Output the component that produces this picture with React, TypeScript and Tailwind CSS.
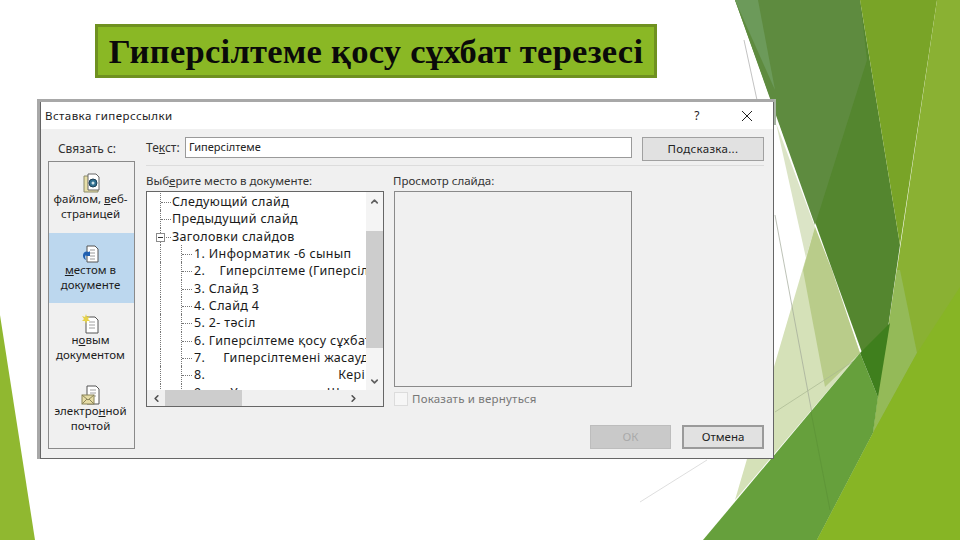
import { ChevronDown, ChevronLeft, ChevronRight, ChevronUp } from 'lucide-react'

const ui = "font-['Noto_Sans','Open_Sans',sans-serif]"

function Backdrop() {
  return (
    <svg className="absolute inset-0" width="960" height="540" viewBox="0 0 960 540">
      <polygon points="0,315 35,540 0,540" fill="#90b830" />
      {/* pale shards behind the dialog */}
      <polygon points="776,123 815,227 806,258" fill="#dbe4c6" />
      <polygon points="815,227 860,353 735,500" fill="#d5e1b8" />
      <polygon points="815,227 832,270 860,353 825,387 803,270" fill="#b9cc8a" />
      <line x1="744" y1="40" x2="757" y2="100" stroke="#a8a8a8" strokeWidth="0.7" />
      <line x1="775" y1="215" x2="830" y2="510" stroke="#a0a898" strokeWidth="0.7" />
      <line x1="640" y1="502" x2="707" y2="460" stroke="#d0d0d0" strokeWidth="0.7" />
      <line x1="775" y1="412" x2="860" y2="357" stroke="#a9b890" strokeWidth="0.7" />
      {/* top right */}
      <polygon points="735,0 860,0 900,245 878,397" fill="#54862f" />
      <polygon points="735,0 860,0 867,60 815,225" fill="#5e8b3f" />
      <polygon points="735,0 758,0 775,90" fill="#6c9a5a" />
      <polygon points="860,0 937,0 900,245" fill="#79a427" />
      <polygon points="937,0 960,0 960,540 817,540 873,433 878,397" fill="#8ab133" />
      <polygon points="900,270 917,353 873,433 878,397 897,270" fill="#94ba58" />
      {/* bottom right */}
      <polygon points="860,353 878,397 873,433 817,540 703,540" fill="#66a03c" />
      <polygon points="860,353 890,323 878,397" fill="#3f7f1d" />
      <polygon points="960,287 960,540 817,540 873,433 917,353" fill="#87b525" />
      <line x1="811" y1="412" x2="830" y2="510" stroke="#5b9236" strokeWidth="0.7" />
      <rect x="774" y="99" width="2" height="26" fill="#a9b5a5" />
    </svg>
  )
}

function FileIcon() {
  return (
    <svg width="20" height="20" viewBox="0 0 20 20">
      <path d="M3 3h9l5 0v16H3z" fill="#e8dfa8" stroke="#8a8a6a" />
      <path d="M7 1h8l3 3v13H7z" fill="#fff" stroke="#666" />
      <circle cx="12" cy="10" r="4" fill="#2f6f8f" stroke="#1d3f55" />
      <circle cx="12" cy="10" r="1.5" fill="#cfe3ea" />
    </svg>
  )
}

function PlaceIcon() {
  return (
    <svg width="20" height="20" viewBox="0 0 20 20">
      <path d="M6 2h8l3 3v13H6z" fill="#fff" stroke="#555" />
      <path d="M9 6h5M9 9h5M9 12h5M9 15h5" stroke="#9a9a9a" />
      <path d="M2 11a4 4 0 0 1 6-3l1-1v5H5l1-1a2 2 0 0 0-2 2l1 3a5 5 0 0 1-3-5z" fill="#1f5fb0" />
    </svg>
  )
}

function NewDocIcon() {
  return (
    <svg width="20" height="20" viewBox="0 0 20 20">
      <path d="M5 3h9l3 3v13H5z" fill="#fff" stroke="#555" />
      <path d="M8 8h6M8 11h6M8 14h6" stroke="#a0a0a0" />
      <path d="M5 0l1 3 3-1-2 3 2 2-3 0-1 3-1-3-3 0 2-2-2-3 3 1z" fill="#e6d24a" />
    </svg>
  )
}

function MailIcon() {
  return (
    <svg width="22" height="22" viewBox="0 0 22 22">
      <path d="M7 2h9l3 3v15H7z" fill="#fff" stroke="#555" />
      <path d="M10 6h6M10 9h6M10 12h6" stroke="#a0a0a0" />
      <rect x="2" y="11" width="12" height="9" fill="#e5dca6" stroke="#8a8458" />
      <path d="M2 11l6 5 6-5M2 20l5-5M14 20l-5-5" fill="none" stroke="#8a8458" />
    </svg>
  )
}

function LinkItem({ icon, selected, h, children }: { icon: React.ReactNode; selected?: boolean; h: string; children: React.ReactNode }) {
  return (
    <div className={`flex flex-col items-center pt-[11px] pr-[2px] text-center text-[11.5px] leading-[14.5px] text-[#1c1c1c] ${h} ${selected ? 'bg-[#bcd7ee]' : ''}`}>
      <div className="flex h-[19px] items-center justify-center">{icon}</div>
      {children}
    </div>
  )
}

const topRows = ['Следующий слайд', 'Предыдущий слайд', 'Заголовки слайдов']
const slideRows = [
  { text: '1. Информатик -6 сынып' },
  { text: '2.    Гиперсілтеме (Гиперсілтеме' },
  { text: '3. Слайд 3' },
  { text: '4. Слайд 4' },
  { text: '5. 2- тәсіл' },
  { text: '6. Гиперсілтеме қосу сұхбат терезесі' },
  { text: '7.     Гиперсілтемені жасауды' },
  { text: '8.', end: 'Кері' },
  { text: '9.       Ұсыныстар', end: 'Ш' },
]

function Tree() {
  return (
    <div className="h-[198px] flex-1 overflow-hidden pt-[1px] text-[12.5px] leading-[17.35px] tracking-[0.35px] text-[#1a1a1a]">
      {topRows.map((r, i) => (
        <div key={r} className="relative flex h-[17.35px] items-stretch whitespace-pre">
          <div className="w-[14px] shrink-0 border-r border-dotted border-[#777]" />
          <div className="mt-[9px] mr-[1px] h-0 w-[10px] shrink-0 border-t border-dotted border-[#777]" />
          <span>{r}</span>
          {i === 2 && (
            <div className="absolute top-[5px] left-[9px] flex h-[9px] w-[9px] items-center justify-center border border-[#8c8c8c] bg-white">
              <div className="h-px w-[5px] bg-[#333]" />
            </div>
          )}
        </div>
      ))}
      {slideRows.map((r) => (
        <div key={r.text} className="flex h-[17.35px] items-stretch whitespace-pre">
          <div className="w-[14px] shrink-0 border-r border-dotted border-[#777]" />
          <div className="w-[21px] shrink-0 border-r border-dotted border-[#777]" />
          <div className="mt-[9px] mr-[2px] h-0 w-[10px] shrink-0 border-t border-dotted border-[#777]" />
          <span>{r.text}</span>
          {r.end && <span className={`ml-auto ${r.end === 'Ш' ? 'pr-[26px]' : 'pr-[1px]'}`}>{r.end}</span>}
        </div>
      ))}
    </div>
  )
}

export default function App() {
  return (
    <div className="relative h-[540px] w-[960px] overflow-hidden bg-white">
      <Backdrop />
      <div className="relative flex flex-col pt-[24px]">
        <div className="ml-[95px] flex h-[54px] w-[562px] items-center justify-center border-[3px] border-[#6f9120] bg-[#8ab825] pt-[1px] font-['Liberation_Serif',serif] text-[34.5px] font-bold tracking-[0.27px] text-[#0a0a0a]">
          Гиперсілтеме қосу сұхбат терезесі
        </div>

        <div className={`mt-[21px] ml-[37px] h-[360px] w-[737px] border-t-[3px] border-l-[3px] border-[#a8a8a8] ${ui}`}>
          <div className="flex h-full flex-col border-r border-b border-l border-[#666] bg-[#f0f0f0]">
            <div className="flex h-[27px] shrink-0 items-center justify-between bg-white pr-[20px] pl-[4px] text-[11.5px] tracking-[0.45px] text-[#222]">
              <span>Вставка гиперссылки</span>
              <div className="flex items-center gap-[41px]">
                <span className="text-[12px]">?</span>
                <svg width="12" height="12" viewBox="0 0 12 12">
                  <path d="M1 1l10 10M11 1L1 11" stroke="#222" strokeWidth="1" />
                </svg>
              </div>
            </div>

            <div className="flex flex-1">
              <div className="ml-[7px] w-[87px] shrink-0">
                <div className="flex h-[32px] items-center justify-center pt-[7px] pr-[9px] text-[12px] text-[#333]">Связать с:</div>
                <div className="h-[288px] border border-[#8a8a8a]">
                  <LinkItem icon={<FileIcon />} h="h-[71px]">
                    <span>файлом, <u>в</u>еб-</span>
                    <span>страницей</span>
                  </LinkItem>
                  <LinkItem icon={<PlaceIcon />} selected h="h-[70px]">
                    <span><u>м</u>естом в</span>
                    <span>документе</span>
                  </LinkItem>
                  <LinkItem icon={<NewDocIcon />} h="h-[71px]">
                    <span>н<u>о</u>вым</span>
                    <span>документом</span>
                  </LinkItem>
                  <LinkItem icon={<MailIcon />} h="h-[70px]">
                    <span>электро<u>н</u>ной</span>
                    <span>почтой</span>
                  </LinkItem>
                </div>
              </div>

              <div className="ml-[11px] flex w-[618px] flex-col pt-[8px] text-[11.5px] text-[#333]">
                <div className="flex h-[24px] items-start">
                  <span className="w-[39px] shrink-0 pt-[2px] text-[12px]">Те<u>к</u>ст:</span>
                  <div className="flex h-[21px] w-[447px] items-center border border-[#9a9a9a] bg-white pl-[3px] text-[11px] text-[#222]">
                    Гиперсілтеме
                  </div>
                  <div className="ml-[10px] flex h-[24px] w-[122px] items-center justify-center border border-[#a0a0a0] bg-[#e1e1e1] tracking-[0.3px] text-[#222]">
                    Подсказка...
                  </div>
                </div>
                <div className="mt-[4px] h-px bg-[#dcdcdc]" />

                <div className="mt-[9px] flex">
                  <div className="w-[238px]">
                    <div className="h-[16px] leading-[11px]">Выб<u>е</u>рите место в документе:</div>
                    <div className="flex h-[216px] flex-col border border-[#666] bg-white">
                      <div className="flex h-[198px]">
                        <Tree />
                        <div className="flex w-[17px] shrink-0 flex-col items-center bg-[#f4f4f4]">
                          <div className="flex h-[17px] items-center justify-center pt-[2px]">
                            <ChevronUp size={11} strokeWidth={3.5} color="#606060" />
                          </div>
                          <div className="mt-[22px] h-[117px] w-full bg-[#cdcdcd]" />
                          <div className="flex flex-1 items-end pb-[3px]">
                            <ChevronDown size={11} strokeWidth={3.5} color="#606060" />
                          </div>
                        </div>
                      </div>
                      <div className="flex h-[16px] items-center bg-[#f0f0f0]">
                        <div className="flex w-[18px] justify-center">
                          <ChevronLeft size={11} strokeWidth={3.5} color="#505050" />
                        </div>
                        <div className="h-full w-[77px] bg-[#cdcdcd]" />
                        <div className="flex flex-1 justify-end pr-[24px]">
                          <ChevronRight size={11} strokeWidth={3.5} color="#505050" />
                        </div>
                      </div>
                    </div>
                  </div>

                  <div className="ml-[10px] w-[238px]">
                    <div className="-ml-px h-[16px] leading-[11px]">Просмотр слайда:</div>
                    <div className="h-[196px] border border-[#8a8a8a]" />
                    <div className="mt-[5px] flex h-[14px] items-center gap-[4px] text-[#777]">
                      <div className="h-[14px] w-[14px] border border-[#dcdcdc] bg-[#f6f6f6]" />
                      <span className="tracking-[0.2px]">Показать и вернуться</span>
                    </div>
                  </div>
                </div>

                <div className="mt-[18px] flex justify-end gap-[11px]">
                  <div className="flex h-[24px] w-[81px] items-center justify-center border border-[#bdbdbd] bg-[#c9c9c9] text-[#aaa]">
                    ОК
                  </div>
                  <div className="flex h-[24px] w-[82px] items-center justify-center border-2 border-[#9a9a9a] bg-[#e1e1e1] text-[#222]">
                    Отмена
                  </div>
                </div>
              </div>
            </div>
          </div>
        </div>
      </div>
    </div>
  )
}
